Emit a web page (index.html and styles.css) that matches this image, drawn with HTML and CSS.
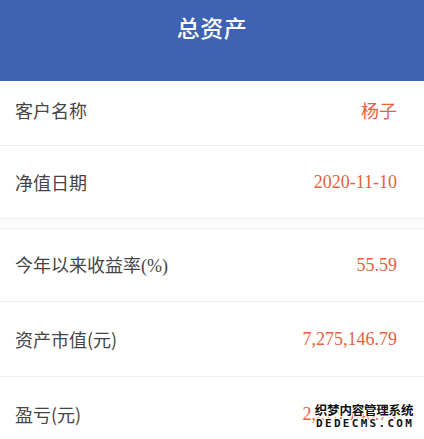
FILE: index.html
```html
<!DOCTYPE html>
<html lang="zh-CN">
<head>
<meta charset="utf-8">
<title>总资产</title>
<link rel="stylesheet" href="styles.css">
</head>
<body>
<div class="page">
  <header class="header"><h1 class="title">总资产</h1></header>
  <div class="list">
    <div class="row row-first"><span class="label">客户名称</span><span class="value cjk">杨子</span></div>
    <div class="row"><span class="label">净值日期</span><span class="value">2020-11-10</span></div>
    <div class="gap"></div>
    <div class="row"><span class="label">今年以来收益率<span class="num">(%)</span></span><span class="value">55.59</span></div>
    <div class="row row-tall"><span class="label">资产市值(元)</span><span class="value">7,275,146.79</span></div>
    <div class="row row-tall"><span class="label">盈亏(元)</span><span class="value">2,275,146.79</span></div>
  </div>
  <div class="watermark">
    <div class="wm-cn">织梦内容管理系统</div>
    <div class="wm-en">DEDECMS.COM</div>
  </div>
</div>
</body>
</html>
```
FILE: styles.css
```css
* { box-sizing: border-box; margin: 0; padding: 0; }
html, body { width: 424px; height: 439px; overflow: hidden; background: #fff; }
body { font-family: "Noto Sans CJK SC", "Noto Sans", sans-serif; }
.page { position: relative; width: 424px; height: 439px; overflow: hidden; }
.header {
  height: 81px;
  background: #3d63b1;
  display: flex;
  justify-content: center;
  padding-top: 9px;
}
.title {
  color: #fff;
  font-size: 23px;
  font-weight: 500;
  line-height: 36px;
  letter-spacing: 0.5px;
}
.list { display: flex; flex-direction: column; }
.row {
  height: 73px;
  display: flex;
  align-items: center;
  justify-content: space-between;
  padding: 0 27px 0 15px;
  border-bottom: 1px solid #efefef;
}
.row-first { height: 65px; padding-bottom: 7px; }
.row-tall { height: 75px; }
.gap { height: 10px; background: #fcfcfc; border-bottom: 1px solid #efefef; }
.label {
  font-size: 18px;
  color: #454545;
  line-height: 24px;
}
.label .num, .value { font-family: "Liberation Serif", "Noto Sans CJK SC", serif; }
.value {
  font-size: 18px;
  color: #e4613d;
  line-height: 24px;
}
.value.cjk { font-family: "Noto Sans CJK SC", sans-serif; }
.watermark {
  position: absolute;
  left: 313px;
  top: 402px;
  width: 102px;
  text-align: center;
  color: #111;
  font-weight: 700;
  text-shadow: 1px 0 0 #fff, -1px 0 0 #fff, 0 1px 0 #fff, 0 -1px 0 #fff, 1px 1px 0 #fff, -1px -1px 0 #fff, 1px -1px 0 #fff, -1px 1px 0 #fff;
}
.wm-cn { font-size: 12.5px; line-height: 16px; letter-spacing: -0.2px; }
.wm-en { font-family: "DejaVu Sans Mono", monospace; font-size: 11px; line-height: 12px; letter-spacing: 2.3px; margin-right: -2.3px; }
```
